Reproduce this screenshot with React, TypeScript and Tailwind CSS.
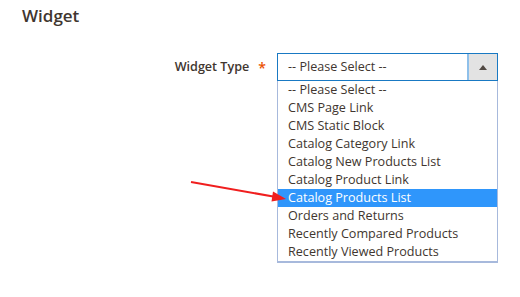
import React from "react";

const options = [
  "-- Please Select --",
  "CMS Page Link",
  "CMS Static Block",
  "Catalog Category Link",
  "Catalog New Products List",
  "Catalog Product Link",
  "Catalog Products List",
  "Orders and Returns",
  "Recently Compared Products",
  "Recently Viewed Products",
];

export default function App() {
  return (
    <div className="relative w-[520px] h-[297px] bg-white font-['Open_Sans',sans-serif] text-[#41362f] overflow-hidden">
      <h2 className="pl-[22px] pt-[4px] text-[17px] leading-[24px] font-semibold">Widget</h2>
      <div className="flex mt-[25px]">
        <div className="w-[277px] h-[28px] flex items-center justify-end pr-[11px]">
          <span className="text-[12.6px] font-semibold">Widget Type</span>
          <span className="ml-[9px] text-[#eb5202] text-[14px] font-semibold">*</span>
        </div>
        <div className="w-[221px] flex flex-col">
          <div className="h-[28px] flex border border-[#1979c3]">
            <div className="flex-1 flex items-center pl-[10px] text-[12.6px]">-- Please Select --</div>
            <div className="w-[30px] bg-[#e3e3e3] border-l-2 border-[#8fc0ea] flex items-center justify-center">
              <svg width="8" height="5" viewBox="0 0 8 5">
                <path d="M0 5 L4 0 L8 5 Z" fill="#514943" />
              </svg>
            </div>
          </div>
          <div className="border border-t-0 border-[#a7b9dc] border-b-2 flex flex-col">
            {options.map((o) => (
              <div
                key={o}
                className={
                  "h-[18px] pl-[10px] flex items-center text-[12.6px] leading-[18px] " +
                  (o === "Catalog Products List" ? "bg-[#2f96fb] text-white" : "")
                }
              >
                {o}
              </div>
            ))}
          </div>
        </div>
      </div>
      <svg className="absolute left-0 top-0" width="520" height="297" viewBox="0 0 520 297">
        <line x1="191" y1="182" x2="276" y2="197" stroke="#f01e1e" strokeWidth="2" />
        <path d="M286 199 L273 191.5 L271.5 201.5 Z" fill="#f01e1e" />
      </svg>
    </div>
  );
}
